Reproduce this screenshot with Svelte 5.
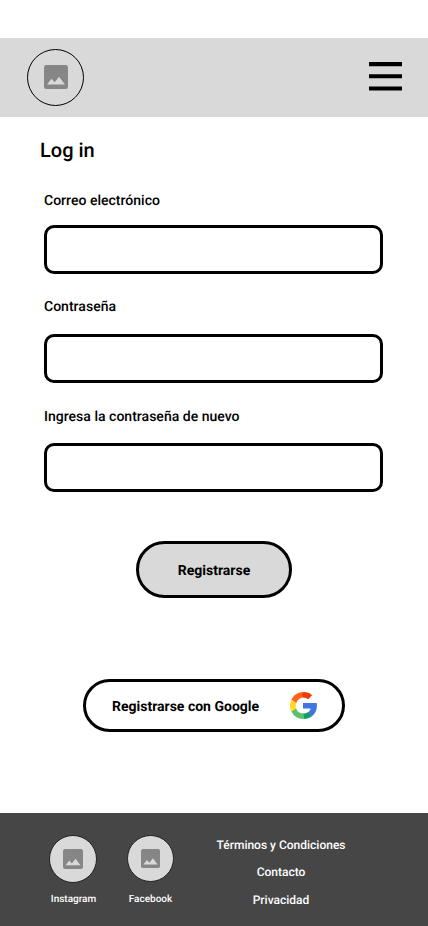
<script>
  const fields = [
    { id: 'email', label: 'Correo electrónico', type: 'email' },
    { id: 'password', label: 'Contraseña', type: 'password' },
    { id: 'repeat', label: 'Ingresa la contraseña de nuevo', type: 'password' }
  ];
  const links = ['Términos y Condiciones', 'Contacto', 'Privacidad'];
</script>

{#snippet picture()}
  <svg class="picture" viewBox="0 0 18 18" aria-hidden="true">
    <rect width="18" height="18" rx="1.700" fill="#868686" />
    <path fill="#d9d9d9" d="M2.300 14.600L5.600 10.400L8 13L11.300 8.800L15.700 14.600Z" />
  </svg>
{/snippet}

<div class="screen">
  <header>
    <div class="avatar">{@render picture()}</div>
    <svg class="menu" width="33" height="29" viewBox="0 0 33 29" role="img" aria-label="Menú">
      <path d="M0 2.100H33M0 14.250H33M0 26.500H33" stroke="#000" stroke-width="4.100" />
    </svg>
  </header>

  <main>
    <h1>Log in</h1>
    <form>
      {#each fields as f}
        <div class="field {f.id}">
          <label for={f.id}>{f.label}</label>
          <input id={f.id} type={f.type} />
        </div>
      {/each}
      <button type="button" class="submit">Registrarse</button>
      <button type="button" class="google">
        <span>Registrarse con Google</span>
        <svg width="27" height="27" viewBox="0 0 27 27" aria-hidden="true">
          <path fill="#4175df" d="M13 11H26.700Q27.200 14 26.600 16.700C25.900 19.800 24.300 22.300 21.900 24.300L17 21C19 19.800 20.200 18.300 20.700 16.600H13Z" />
          <path fill="#129d62" d="M17.500 20.400L22.100 24.100Q18.700 27 13.500 27L13 21.500Q15.600 21.500 17.500 20.400Z" />
          <path fill="#5bc26a" d="M5.900 16.200Q8 21.500 13.500 21.500V27Q5 27 1.400 19.600Z" />
          <path fill="#ffda2d" d="M1.500 7.400L6.300 10.800Q5.300 13.500 6.200 16.200L1.400 19.800Q-1.500 13.500 1.500 7.400Z" />
          <path fill="#ff641a" d="M1.400 7.500Q5 0 13.500 0L14.500 5.500Q8.500 5.500 6.200 10.900Z" />
          <path fill="#f13a05" d="M13.500 0Q18.500 0 22.200 3.200L18.200 7.300Q16.200 5.500 13.500 5.500L11.500 3Z" />
        </svg>
      </button>
    </form>
  </main>

  <footer>
    <div class="social instagram">
      <div class="avatar">{@render picture()}</div>
      <span>Instagram</span>
    </div>
    <div class="social facebook">
      <div class="avatar">{@render picture()}</div>
      <span>Facebook</span>
    </div>
    <nav>
      {#each links as link}<span>{link}</span>{/each}
    </nav>
  </footer>
</div>

<style>
  .screen {
    width: 428px;
    height: 926px;
    box-sizing: border-box;
    padding-top: 38px;
    display: flex;
    flex-direction: column;
    background: #fff;
    color: #000;
    font-family: Roboto, "Liberation Sans", sans-serif;
    font-weight: 500;
    text-rendering: geometricPrecision;
    overflow: hidden;
  }
  header {
    height: 79px;
    flex: none;
    box-sizing: border-box;
    padding: 0 26px 0 27px;
    display: flex;
    align-items: center;
    justify-content: space-between;
    background: #d9d9d9;
  }
  .avatar {
    width: 57px;
    height: 57px;
    box-sizing: border-box;
    border: 1px solid #000;
    border-radius: 50%;
    background: #d9d9d9;
    display: flex;
    align-items: center;
    justify-content: center;
  }
  .picture { width: 24px; height: 24px; display: block; }
  header .picture { margin: 0 0 1px 0; }
  .menu { display: block; margin-top: -2px; }
  main { flex: 1; padding: 21px 45px 0 44px; }
  h1 { margin: 0 0 0 -4px; font-size: 20px; line-height: 24px; font-weight: 500; }
  form { display: flex; flex-direction: column; padding-top: 31px; }
  .field { display: flex; flex-direction: column; }
  label { font-size: 14px; line-height: 16px; margin-bottom: 16px; letter-spacing: 0.020px; }
  .password { margin-top: 25px; }
  .password label { margin-bottom: 19px; }
  .repeat { margin-top: 26px; }
  .repeat label { margin-bottom: 18px; }
  input {
    height: 49px;
    box-sizing: border-box;
    border: 3px solid #000;
    border-radius: 10px;
    background: #fff;
    padding: 0 12px;
    font: inherit;
    outline: none;
  }
  button {
    box-sizing: border-box;
    border: 3px solid #000;
    padding: 0;
    font: 700 14px/16px Roboto, "Liberation Sans", sans-serif;
    color: #000;
    text-rendering: geometricPrecision;
  }
  .submit {
    width: 156px;
    height: 57px;
    margin: 49px 0 0 92px;
    padding-top: 2px;
    border-radius: 29px;
    background: #d9d9d9;
  }
  .google {
    width: 262px;
    height: 53px;
    margin: 81px 0 0 39px;
    padding: 0 25px 0 26px;
    border-radius: 27px;
    background: #fff;
    display: flex;
    align-items: center;
    justify-content: space-between;
  }
  .google span { padding-top: 2px; }
  footer {
    height: 113px;
    flex: none;
    box-sizing: border-box;
    padding-left: 49px;
    display: flex;
    background: #464646;
    color: #fff;
  }
  .social {
    width: 48px;
    padding-top: 22px;
    display: flex;
    flex-direction: column;
    align-items: center;
    font-size: 10px;
    line-height: 12px;
  }
  .social .avatar { width: 48px; height: 48px; margin-bottom: 11px; border-color: #222; }
  .instagram span { padding-left: 1px; }
  .social .picture { width: 20px; height: 20px; }
  .facebook { margin-left: 30px; width: 47px; }
  .facebook .avatar { width: 47px; height: 47px; margin-bottom: 12px; }
  .facebook .picture { width: 19px; height: 19px; }
  nav {
    width: 130px;
    margin-left: 42px;
    padding-top: 25px;
    display: flex;
    flex-direction: column;
    align-items: center;
    gap: 13px;
    font-size: 12px;
    line-height: 14px;
    white-space: nowrap;
  }
  nav span:last-child { margin-top: 1px; }
</style>
